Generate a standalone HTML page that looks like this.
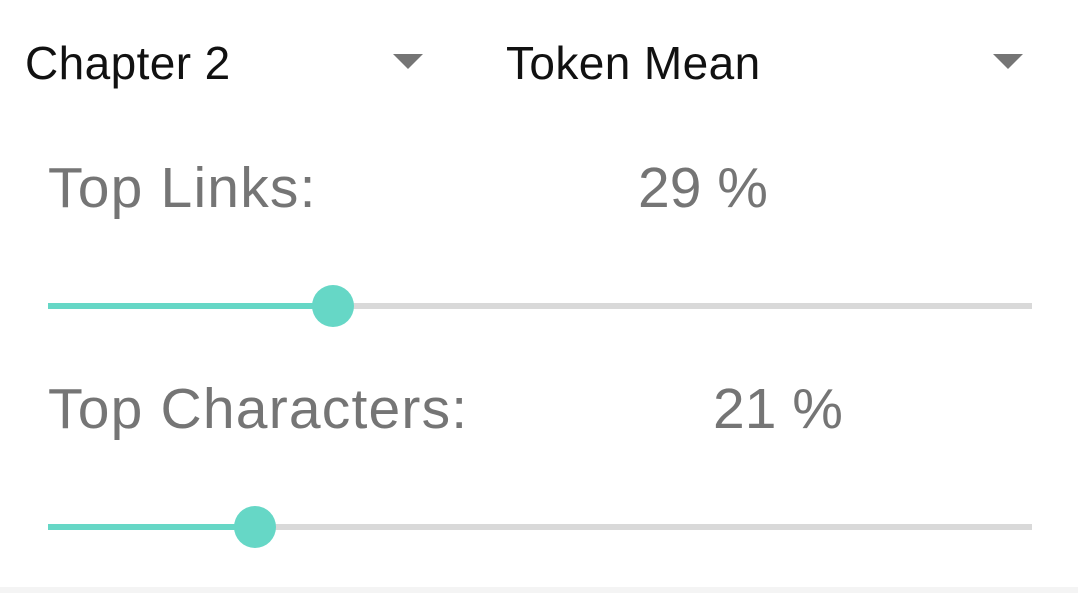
<!DOCTYPE html>
<html><head><style>
body{margin:0;width:1078px;height:593px;background:#fff;position:relative;overflow:hidden;font-family:"Liberation Sans",Roboto,sans-serif}
.t{position:absolute;white-space:nowrap;line-height:1}
.dd{font-size:46px;color:#111;letter-spacing:0.4px}
.lb{font-size:57px;color:#757575;letter-spacing:1.2px}
.tri{position:absolute;width:0;height:0;border-left:15px solid transparent;border-right:15px solid transparent;border-top:15px solid #757575}
.track{position:absolute;left:48px;width:984px;height:6px;background:#d9d9d9}
.fill{position:absolute;left:48px;height:6px;background:#66d7c6}
.thumb{position:absolute;width:42px;height:42px;border-radius:50%;background:#66d7c6}
</style></head><body>
<div class="t dd" style="left:25px;top:40px">Chapter 2</div>
<div class="tri" style="left:393px;top:54px"></div>
<div class="t dd" style="left:506px;top:40px">Token Mean</div>
<div class="tri" style="left:993px;top:54px"></div>

<div class="t lb" style="left:48px;top:160px">Top Links:</div>
<div class="t lb" style="left:638px;top:160px;letter-spacing:0">29 %</div>
<div class="track" style="top:303px"></div>
<div class="fill" style="top:303px;width:285px"></div>
<div class="thumb" style="left:312px;top:285px"></div>

<div class="t lb" style="left:48px;top:381px">Top Characters:</div>
<div class="t lb" style="left:713px;top:381px;letter-spacing:0">21 %</div>
<div class="track" style="top:524px"></div>
<div class="fill" style="top:524px;width:207px"></div>
<div class="thumb" style="left:234px;top:506px"></div>

<div style="position:absolute;left:0;top:587px;width:1078px;height:6px;background:#f4f4f4"></div>
</body></html>
